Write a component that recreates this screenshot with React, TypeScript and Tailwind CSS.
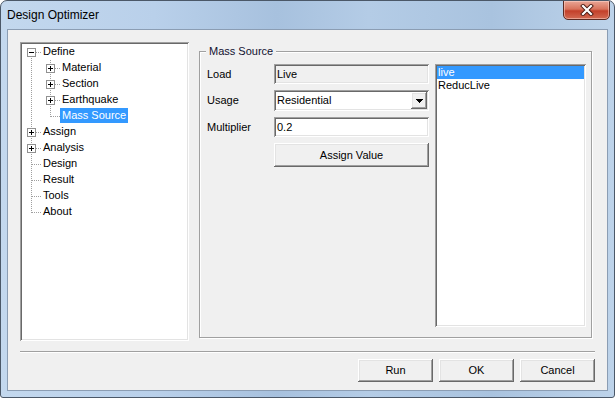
import React from 'react';

type Cell = 'first' | 'mid' | 'last' | 'pass' | 'blank';

// one 19x16 cell of the tree guide lines, optionally with an expander box
const TreeCell = ({ kind, box }: { kind: Cell; box?: '+' | '-' }) => (
  <svg width="19" height="16" className="shrink-0" shapeRendering="crispEdges">
    {kind !== 'blank' && (
      <line
        x1="9.5"
        x2="9.5"
        y1={kind === 'first' ? 8 : 0}
        y2={kind === 'last' ? 9 : 16}
        stroke="#a0a0a0"
        strokeDasharray="1 1"
      />
    )}
    {kind !== 'pass' && kind !== 'blank' && (
      <line x1="10" x2="19" y1="8.5" y2="8.5" stroke="#a0a0a0" strokeDasharray="1 1" />
    )}
    {box && (
      <g>
        <rect x="5.5" y="4.5" width="8" height="8" fill="#fff" stroke="#919191" />
        <line x1="7" x2="12" y1="8.5" y2="8.5" stroke="#000" />
        {box === '+' && <line x1="9.5" x2="9.5" y1="6" y2="11" stroke="#000" />}
      </g>
    )}
  </svg>
);

interface Node {
  label: string;
  cells: { kind: Cell; box?: '+' | '-' }[];
  selected?: boolean;
}

const treeNodes: Node[] = [
  { label: 'Define', cells: [{ kind: 'first', box: '-' }] },
  { label: 'Material', cells: [{ kind: 'pass' }, { kind: 'mid', box: '+' }] },
  { label: 'Section', cells: [{ kind: 'pass' }, { kind: 'mid', box: '+' }] },
  { label: 'Earthquake', cells: [{ kind: 'pass' }, { kind: 'mid', box: '+' }] },
  { label: 'Mass Source', cells: [{ kind: 'pass' }, { kind: 'last' }], selected: true },
  { label: 'Assign', cells: [{ kind: 'mid', box: '+' }] },
  { label: 'Analysis', cells: [{ kind: 'mid', box: '+' }] },
  { label: 'Design', cells: [{ kind: 'mid' }] },
  { label: 'Result', cells: [{ kind: 'mid' }] },
  { label: 'Tools', cells: [{ kind: 'mid' }] },
  { label: 'About', cells: [{ kind: 'last' }] },
];

const sunken =
  'shadow-[inset_1px_1px_#a0a0a0,inset_-1px_-1px_#ffffff,inset_2px_2px_#696969,inset_-2px_-2px_#e3e3e3]';
const raised =
  'shadow-[inset_-1px_-1px_#696969,inset_1px_1px_#ffffff,inset_-2px_-2px_#a0a0a0,inset_2px_2px_#e3e3e3]';

const Button = ({ children, className = '' }: { children: React.ReactNode; className?: string }) => (
  <div className={`flex items-center justify-center bg-[#f0f0f0] text-black ${raised} ${className}`}>{children}</div>
);

export default function App() {
  return (
    <div className="flex h-[398px] w-[615px] flex-col overflow-hidden rounded-t-[7px] rounded-b-[3px] border border-[#4b5868] bg-[linear-gradient(90deg,#c3d8ee_0%,#b9d0ea_25%,#a7c1de_45%,#b4cce6_60%,#a9c3df_80%,#bdd3ea_100%)] font-['Liberation_Sans',Arial,sans-serif] text-[11px] text-black">
      {/* title bar */}
      <div className="flex h-[28px] shrink-0 items-start justify-between">
        <span className="pl-[6px] pt-[7px] text-[12px] leading-[14px] text-black">Design Optimizer</span>
        <div className="mr-[4px] mt-[-1px] flex h-[20px] w-[47px] items-center justify-center rounded-b-[5px] border border-[#5b2a22] bg-[linear-gradient(180deg,#e9a696_0%,#d8735c_45%,#c3402a_55%,#d26a52_100%)] shadow-[inset_0_0_0_1px_rgba(255,220,210,0.5)]">
          <svg width="14" height="12" viewBox="0 0 14 12">
            <path d="M3 2 L11 10 M11 2 L3 10" stroke="#4a1a12" strokeWidth="4" strokeLinecap="square" />
            <path d="M3 2 L11 10 M11 2 L3 10" stroke="#ffffff" strokeWidth="2.2" strokeLinecap="square" />
          </svg>
        </div>
      </div>

      {/* client area */}
      <div className="mx-[6px] flex h-[362px] w-[601px] flex-col border border-[#8b9db3] bg-[#f0f0f0] px-[12px] pt-[12px]">
        <div className="flex">
          {/* tree */}
          <div className={`h-[299px] w-[169px] shrink-0 bg-white p-[2px] ${sunken}`}>
            {treeNodes.map((n) => (
              <div key={n.label} className="flex h-[16px] items-center">
                {n.cells.map((c, i) => (
                  <TreeCell key={i} kind={c.kind} box={c.box} />
                ))}
                <span
                  className={`h-[15px] self-start px-[2px] leading-[15px] ${
                    n.selected ? 'bg-[#3399ff] text-white' : 'text-black'
                  }`}
                >
                  {n.label}
                </span>
              </div>
            ))}
          </div>

          {/* group box */}
          <div className="relative ml-[10px] mt-[9px] h-[287px] w-[393px] shrink-0 border border-[#a0a0a0] shadow-[1px_1px_0_#ffffff,inset_1px_1px_0_#ffffff]">
            <span className="absolute left-[6px] top-[-8px] bg-[#f0f0f0] px-[3px] leading-[14px] text-[#101030]">
              Mass Source
            </span>
            <div className="flex pl-[7px] pt-[12px]">
              <div className="flex w-[222px] flex-col gap-[6px]">
                <div className="flex h-[20px] items-center">
                  <span className="w-[67px]">Load</span>
                  <div className={`flex h-[20px] w-[155px] items-center bg-[#f0f0f0] px-[3px] ${sunken}`}>Live</div>
                </div>
                <div className="flex h-[21px] items-center">
                  <span className="w-[67px]">Usage</span>
                  <div className={`flex h-[21px] w-[155px] items-center justify-between bg-white pl-[3px] pr-[2px] ${sunken}`}>
                    <span>Residential</span>
                    <div className={`flex h-[17px] w-[16px] items-center justify-center bg-[#f0f0f0] ${raised}`}>
                      <svg width="7" height="4" viewBox="0 0 7 4" shapeRendering="crispEdges">
                        <path d="M0 0 H7 L3.5 4 Z" fill="#000" />
                      </svg>
                    </div>
                  </div>
                </div>
                <div className="flex h-[20px] items-center">
                  <span className="w-[67px]">Multiplier</span>
                  <div className={`flex h-[20px] w-[155px] items-center bg-white px-[3px] ${sunken}`}>0.2</div>
                </div>
                <div className="flex">
                  <Button className="ml-[67px] h-[24px] w-[155px]">Assign Value</Button>
                </div>
              </div>

              {/* list box */}
              <div className={`ml-[6px] h-[263px] w-[151px] bg-white p-[2px] ${sunken}`}>
                <div className="h-[13px] bg-[#3399ff] pl-[1px] leading-[13px] text-white">live</div>
                <div className="h-[13px] pl-[1px] leading-[13px]">ReducLive</div>
              </div>
            </div>
          </div>
        </div>

        {/* separator */}
        <div className="mt-[10px] h-[2px] w-[575px] border-t border-b border-t-[#a0a0a0] border-b-white" />

        {/* buttons */}
        <div className="mt-[6px] flex justify-end gap-[6px]">
          <Button className="h-[23px] w-[75px]">Run</Button>
          <Button className="h-[23px] w-[75px]">OK</Button>
          <Button className="h-[23px] w-[75px]">Cancel</Button>
        </div>
      </div>
    </div>
  );
}
